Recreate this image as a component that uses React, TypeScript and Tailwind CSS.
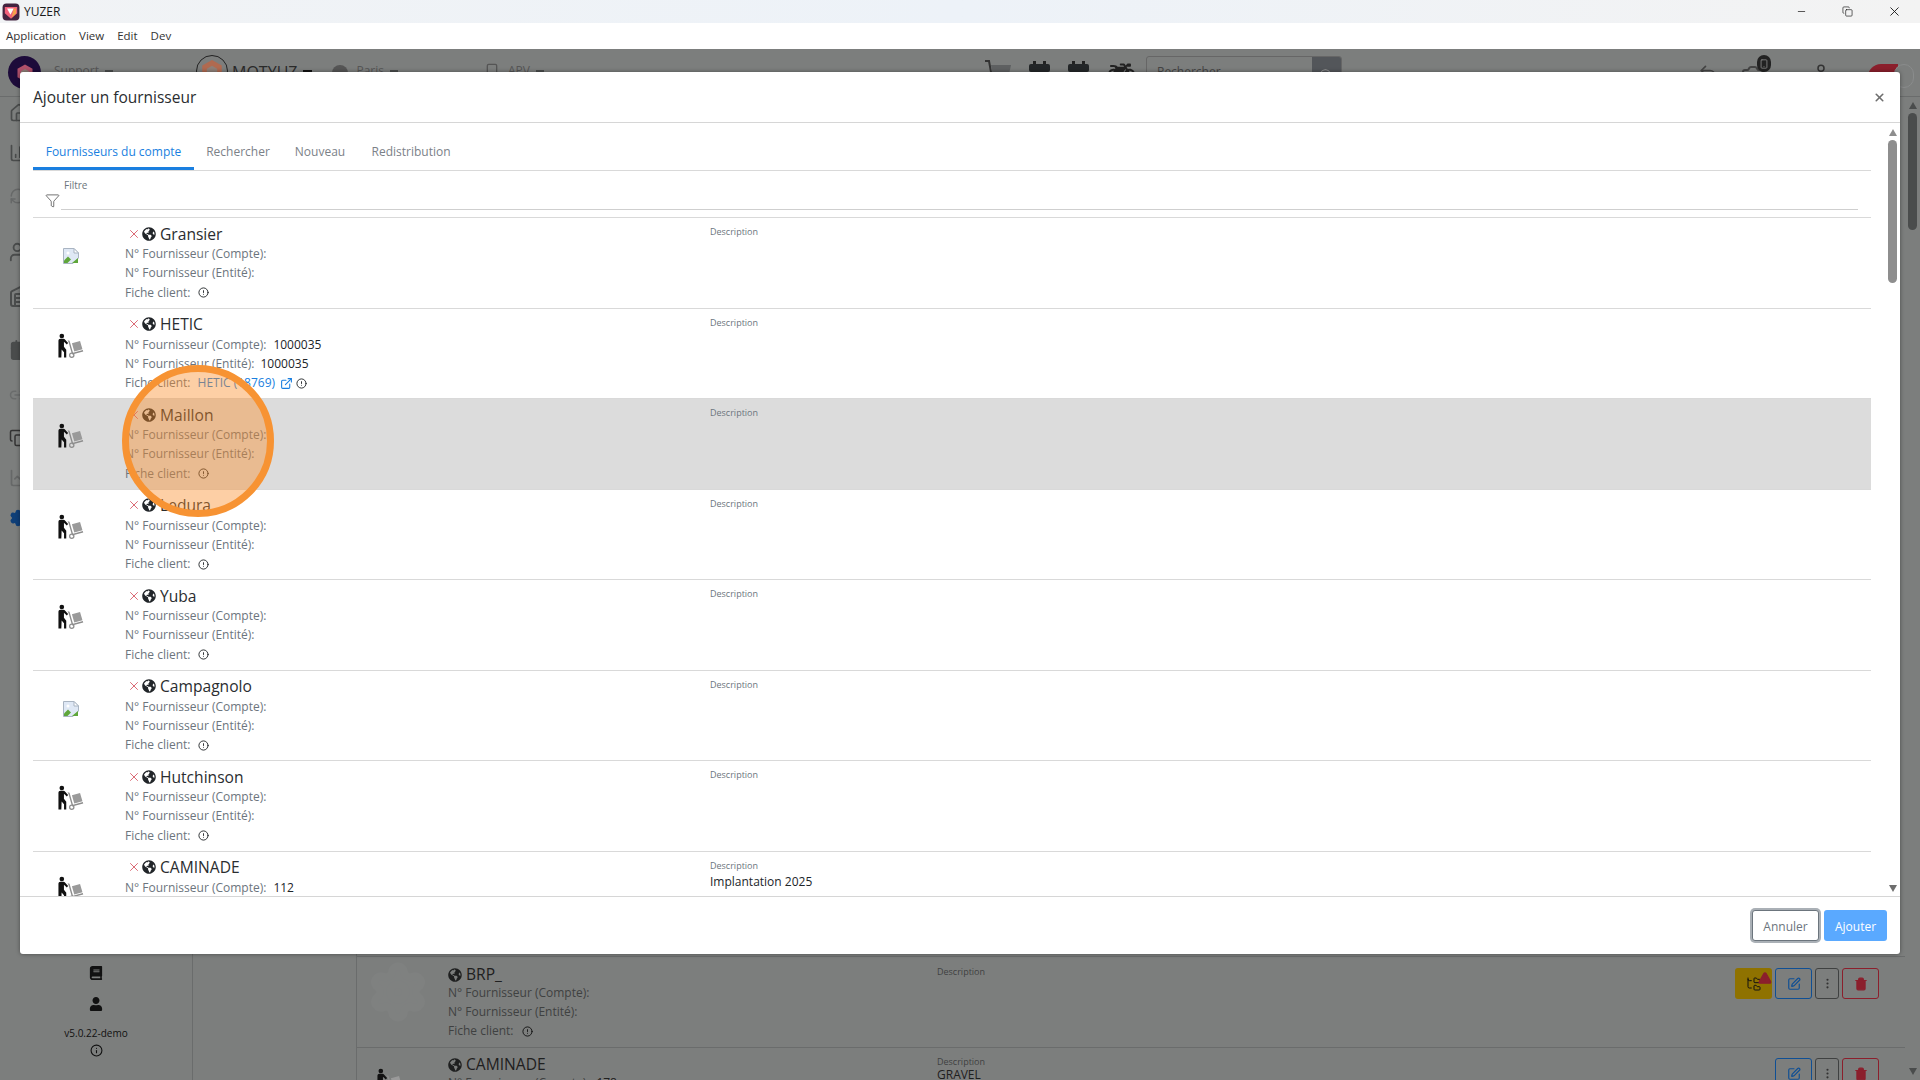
import React from "react";
import { FaGlobeAmericas, FaBook, FaUser, FaMotorcycle } from "react-icons/fa";
import { X, AlertCircle, ExternalLink, Filter, Minus, Home, BarChart3, RefreshCw, Users, Warehouse, Calendar, Link2, Settings, Search, Undo2, Camera, Info, Trash2, SquarePen, MoreVertical, FolderTree, TriangleAlert, User, LineChart, Smartphone, Copy } from "lucide-react";

function Dolly() {
  return (
    <svg width="27" height="26" viewBox="0 0 28 26" className="block">
      <circle cx="5" cy="2.6" r="2.4" fill="#111" />
      <path d="M1.5 7.5c0-1.2.9-2 2-2h3.2c.8 0 1.3.3 1.8 1l3 3.400-1.300 1.500-3-2.800v5.200l2.400 3V25H7.300v-5.600L4.800 16.500l-.3 8.500H1.500z" fill="#111" />
      <path d="M11 7l2 .6 3.600 12.400 10.200-2.800.4 1.400-11.600 3.200L12 9z" fill="#8d8d8d" />
      <circle cx="15.300" cy="22.600" r="2.200" fill="none" stroke="#8d8d8d" strokeWidth="1.300" />
      <path d="M15.500 10.200l8.400-2.400 2.500 8.500-8.500 2.400z" fill="#9a9a9a" />
    </svg>
  );
}

function BrokenImage() {
  return (
    <svg width="16" height="16" viewBox="0 0 16 16" className="block">
      <path d="M.5.500h10.500l4.500 4.500v5L10 15.500H.5z" fill="#dfe8f5" stroke="#a9b4c2" />
      <path d="M11 .5V5h4.500z" fill="#fff" stroke="#a9b4c2" />
      <path d="M1 15v-2.500L5 8.500l3 3-3.500 3.500z" fill="#5fa63a" />
      <path d="M9 15l6-5v5z" fill="#5fa63a" />
      <circle cx="5" cy="5" r="1.500" fill="#fff" />
    </svg>
  );
}

function Hex({ size, color }: { size: number; color: string }) {
  return (
    <svg width={size} height={size} viewBox="0 0 20 20" className="block">
      <path d="M10 1.500l7.500 4.300v8.400L10 18.500l-7.500-4.300V5.800z" fill={color} />
      <path d="M10 6l4 2.300v4L10 15l-4-2.700v-4z" fill="#8f8078" />
    </svg>
  );
}

function DarkCal() {
  return (
    <svg width="21" height="24" viewBox="0 0 21 24" className="block">
      <rect x="4" y="0" width="3" height="5" fill="#222" />
      <rect x="14" y="0" width="3" height="5" fill="#222" />
      <rect x="0" y="3" width="21" height="8" rx="2" fill="#232628" />
      <rect x="0" y="11" width="21" height="12" fill="#55585a" />
    </svg>
  );
}

function Cart() {
  return (
    <svg width="26" height="24" viewBox="0 0 26 24" className="block">
      <path d="M0 1h4l4 22" fill="none" stroke="#333" strokeWidth="2" />
      <path d="M6 5h20l-3 14H8z" fill="#5e6061" />
    </svg>
  );
}

function Caret() {
  return <div className="ml-[6px] mt-[21px] h-[4px] w-[8px] bg-[#4a4c4c]" />;
}

type Row = { name: string; image?: "broken"; compte?: string; entite?: string; link?: boolean; desc?: string; active?: boolean };
const rows: Row[] = [
  { name: "Gransier", image: "broken" },
  { name: "HETIC", compte: "1000035", entite: "1000035", link: true },
  { name: "Maillon", active: true },
  { name: "Ledura" },
  { name: "Yuba" },
  { name: "Campagnolo", image: "broken" },
  { name: "Hutchinson" },
  { name: "CAMINADE", compte: "112", desc: "Implantation 2025" },
];

function ListRow({ r }: { r: Row }) {
  return (
    <div className={`flex h-[90.5px] shrink-0 border-b border-[#d9d9d9] ${r.active ? "bg-[#dcdcdc]" : "bg-white"}`}>
      <div className="w-[92px] shrink-0">
        {r.image ? (
          <div className="ml-[30px] mt-[30px]"><BrokenImage /></div>
        ) : (
          <div className="ml-[24px] mt-[24px]"><Dolly /></div>
        )}
      </div>
      <div className="w-[585px] shrink-0 pt-[5px]">
        <div className="flex h-[21.500px] items-center">
          <X size={14} strokeWidth={1.6} className="ml-[2px] text-[#d8606c]" />
          <FaGlobeAmericas size={14} className="ml-[1px] text-[#212529]" />
          <span className="ml-[4px] text-[15.600px] font-medium leading-[22px] text-[#2a2d30]">{r.name}</span>
        </div>
        <div className="flex h-[19.3px] items-center text-[12px] text-[#6c757d]">
          <span>N° Fournisseur (Compte):</span>
          {r.compte && <span className="ml-[7px] text-[#212529]">{r.compte}</span>}
        </div>
        <div className="flex h-[19.3px] items-center text-[12px] text-[#6c757d]">
          <span>N° Fournisseur (Entité):</span>
          {r.entite && <span className="ml-[6px] text-[#212529]">{r.entite}</span>}
        </div>
        <div className="flex h-[19.3px] items-center text-[12px] text-[#6c757d]">
          <span>Fiche client:</span>
          {r.link && <span className="ml-[7px] text-[#1a7fe0]">HETIC (18769)</span>}
          {r.link && <ExternalLink size={13} className="ml-[5px] text-[#1a7fe0]" />}
          <AlertCircle size={11} strokeWidth={2} className={`${r.link ? "ml-[3px]" : "ml-[7px]"} text-[#212529]`} />
        </div>
      </div>
      <div className="pt-[7px]">
        <div className="text-[9px] leading-[13px] text-[#6c757d]">Description</div>
        {r.desc && <div className="mt-[2px] text-[12px] leading-[16px] text-[#212529]">{r.desc}</div>}
      </div>
    </div>
  );
}

function Modal() {
  return (
    <div className="absolute left-[20px] top-[23px] flex h-[882px] w-[1880px] flex-col rounded-[3px] bg-white shadow-[0_0_4px_rgba(0,0,0,0.4)]">
      <div className="flex h-[51px] shrink-0 items-center justify-between border-b border-[#d6d6d6] pl-[13px] pr-[14px]">
        <div className="pt-[2px] text-[15.500px] font-medium text-[#2a2d30]">Ajouter un fournisseur</div>
        <X size={13} strokeWidth={3} className="text-[#6e6e6e]" />
      </div>
      <div className="relative min-h-0 flex-1 overflow-hidden pl-[13px] pr-[29px]">
        <div className="flex h-[48px] items-end border-b border-[#d9d9d9] text-[12px] text-[#7b8188]">
          <div className="flex h-[47px] w-[161px] items-center justify-center border-b-[3px] border-[#1a7fe0] pt-[13px] text-[#1a7fe0]">Fournisseurs du compte</div>
          <div className="flex h-[47px] w-[88px] items-center justify-center pt-[11px]">Rechercher</div>
          <div className="flex h-[47px] w-[76px] items-center justify-center pt-[11px]">Nouveau</div>
          <div className="flex h-[47px] w-[106px] items-center justify-center pt-[11px]">Redistribution</div>
        </div>
        <div className="flex h-[47px] border-b border-[#d9d9d9]">
          <div className="w-[28px] shrink-0 pl-[12px] pt-[22px]">
            <Filter size={15} strokeWidth={1} className="text-[#222]" />
          </div>
          <div className="mr-[13px] flex h-[39px] flex-1 border-b border-[#cfcfcf] pt-[7px] pl-[3px] text-[10px] leading-[14px] text-[#6c757d]">Filtre</div>
        </div>
        {rows.map((r) => <ListRow key={r.name} r={r} />)}
        <div className="absolute right-[3px] top-[3px] flex h-[767px] w-[9px] flex-col items-center">
          <div className="mt-[3px] h-0 w-0 border-x-[4.500px] border-b-[7px] border-x-transparent border-b-[#8e8e8e]" />
          <div className="mt-[4px] h-[143px] w-[9px] rounded-full bg-[#8e8e8e]" />
          <div className="mt-auto mb-[1px] h-0 w-0 border-x-[4.500px] border-t-[7px] border-x-transparent border-t-[#6e6e6e]" />
        </div>
      </div>
      <div className="flex h-[58px] shrink-0 items-start justify-end gap-[5px] border-t border-[#d6d6d6] pr-[13px] pt-[13px] text-[12px]">
        <div className="flex h-[31px] w-[67px] items-center justify-center rounded-[3px] border border-[#6c757d] bg-white pt-[3px] text-[#6c757d] shadow-[0_0_0_2px_#aab0b6]">Annuler</div>
        <div className="flex h-[31px] w-[63px] items-center justify-center rounded-[3px] bg-[#5aa9ff] pt-[3px] text-white">Ajouter</div>
      </div>
    </div>
  );
}

function Highlight() {
  return <div className="absolute left-[122px] top-[316px] h-[152px] w-[152px] rounded-full border-[7px] border-[#f79333] bg-[rgba(250,140,40,0.42)]" />;
}

const sideIcons = [
  { mt: "mt-0", el: <Home size={20} /> },
  { mt: "mt-[16px]", el: <BarChart3 size={20} /> },
  { mt: "mt-[19px]", el: <RefreshCw size={18} className="text-[#666868]" /> },
  { mt: "mt-[32px]", el: <Users size={22} /> },
  { mt: "mt-[21px]", el: <Warehouse size={24} /> },
  { mt: "mt-[29px]", el: <Calendar size={22} fill="#4a4c4c" /> },
  { mt: "mt-[21px]", el: <Link2 size={18} className="text-[#6a6c6c]" /> },
  { mt: "mt-[19px]", el: <Copy size={18} className="text-[#333]" /> },
  { mt: "mt-[16px]", el: <LineChart size={20} className="text-[#666868]" /> },
  { mt: "mt-[16px]", el: <Settings size={18} className="text-[#0f3f78]" fill="#0f3f78" /> },
];

function Background() {
  return (
    <div className="absolute inset-0 flex flex-col bg-[#7c7e7d] text-[#3a3c3c]">
      <div className="flex h-[48px] shrink-0 items-start border-b border-[#6a6c6c]">
        <div className="ml-[8px] mt-[7px] flex h-[33px] w-[33px] items-center justify-center rounded-full bg-[#1d0b3a]"><Hex size={20} color="#b0506a" /></div>
        <div className="ml-[13px] mt-[13px] text-[12px] text-[#555]">Support</div>
        <Caret />
        <div className="ml-[83px] mt-[6px] flex h-[32px] w-[32px] items-center justify-center rounded-full border border-[#222]"><Hex size={26} color="#b06a50" /></div>
        <div className="ml-[4px] mt-[11px] text-[16px] text-[#2a2a2a]">MOTYUZ</div>
        <div className="ml-[6px] mt-[21px] h-[4px] w-[9px] bg-[#111]" />
        <div className="ml-[20px] mt-[16px] h-[16px] w-[16px] rounded-full bg-[#555]" />
        <div className="ml-[8px] mt-[13px] text-[12px] text-[#555]">Paris</div>
        <Caret />
        <Smartphone size={16} className="ml-[86px] mt-[14px] text-[#555]" />
        <div className="ml-[8px] mt-[13px] text-[12px] text-[#555]">APV</div>
        <Caret />
        <div className="ml-[441px] mt-[11px]"><Cart /></div>
        <div className="ml-[18px] mt-[12px]"><DarkCal /></div>
        <div className="ml-[18px] mt-[12px]"><DarkCal /></div>
        <FaMotorcycle size={27} className="ml-[19px] mt-[9px] text-[#222]" />
        <div className="ml-[11px] mt-[7px] flex h-[40px] w-[196px] overflow-hidden rounded-[3px] border border-[#666]">
          <div className="flex-1 pl-[10px] pt-[6px] text-[12px] text-[#444]">Rechercher</div>
          <div className="flex w-[29px] justify-center bg-[#53565a] pt-[11px]"><Search size={14} className="text-[#999]" /></div>
        </div>
        <Undo2 size={20} className="ml-[356px] mt-[14px] text-[#444]" />
        <Camera size={24} className="ml-[23px] mt-[14px] text-[#444]" />
        <div className="-ml-[8px] mt-[6px] flex h-[17px] w-[14px] items-center justify-center rounded-full bg-[#222]"><Smartphone size={10} className="text-[#888]" /></div>
        <User size={18} className="ml-[41px] mt-[14px] text-[#333]" />
        <div className="ml-[38px] mt-[15px] h-[26px] w-[30px] rounded-l-full bg-[#8b1f2c]" />
        <div className="-ml-[4px] mt-[15px] h-[24px] w-[20px] rounded-full border border-[#8a8c8c] bg-[#7c7e7d]" />
      </div>
      <div className="flex min-h-0 flex-1">
        <div className="flex w-[193px] shrink-0 flex-col border-r border-[#6a6c6c]">
          <div className="pt-[4px] text-[#4a4c4c]">
            {sideIcons.map((s, i) => (
              <div key={i} className={`flex h-[24px] items-center pl-[9px] ${s.mt}`}>{s.el}</div>
            ))}
          </div>
          <div className="mt-auto flex flex-col items-center pb-[23px]">
            <FaBook size={14} className="text-[#111]" />
            <FaUser size={14} className="mt-[17px] text-[#111]" />
            <div className="mt-[15px] text-[10px] text-[#111]">v5.0.22-demo</div>
            <Info size={13} className="mt-[3px] text-[#111]" />
          </div>
        </div>
        <div className="w-[164px] shrink-0 border-r border-[#6a6c6c]" />
        <div className="flex min-w-0 flex-1 flex-col justify-end pr-[15px]">
          <BgRow name="BRP_" warn />
          <BgRow name="CAMINADE" desc="GRAVEL" dolly cut compte="178" />
        </div>
      </div>
      <div className="absolute right-[3px] top-[48px] flex h-[983px] w-[9px] flex-col items-center">
        <div className="mt-[5px] h-0 w-0 border-x-[4.500px] border-b-[7px] border-x-transparent border-b-[#4a4c4c]" />
        <div className="mt-[4px] h-[117px] w-[9px] rounded-full bg-[#4a4c4c]" />
        <div className="mt-auto mb-[5px] h-0 w-0 border-x-[4.500px] border-t-[7px] border-x-transparent border-t-[#4a4c4c]" />
      </div>
    </div>
  );
}

function BgRow({ name, desc, warn, dolly, cut, compte }: { name: string; desc?: string; warn?: boolean; dolly?: boolean; cut?: boolean; compte?: string }) {
  return (
    <div className={`flex shrink-0 items-start ${cut ? "h-[32px] overflow-hidden pt-[3px]" : "h-[92px] border-y border-[#6a6c6c] pt-[4px]"}`}>
      <div className={`w-[91px] shrink-0 ${cut ? "pl-[19px] pt-[17px]" : "pl-[10px]"}`}>
        {dolly ? <Dolly /> : <Settings size={62} strokeWidth={3} className="text-[#7f8180]" fill="#7f8180" />}
      </div>
      <div className="w-[489px] shrink-0 text-[12px] text-[#3f4141]">
        <div className="flex h-[22px] items-center gap-[4px] pt-[5px] text-[15.600px] font-medium text-[#1f2020]">
          <FaGlobeAmericas size={14} />{name}
        </div>
        <div className="flex h-[19.300px] items-center">N° Fournisseur (Compte):{compte && <span className="ml-[7px] text-[#1f2020]">{compte}</span>}</div>
        <div className="flex h-[19.300px] items-center">N° Fournisseur (Entité):</div>
        <div className="flex h-[19.300px] items-center gap-[8px]">Fiche client: <AlertCircle size={11} className="text-[#111]" /></div>
      </div>
      <div className="min-w-0 flex-1 pt-[5px]">
        <div className="text-[9px] leading-[12px] text-[#3f4141]">Description</div>
        {desc && <div className="text-[12px] leading-[14px] text-[#1f2020]">{desc}</div>}
      </div>
      <div className="mt-[7px] flex shrink-0 gap-[3px] pr-[26px]">
        {warn && (
          <div className="relative flex h-[31px] w-[37px] items-center justify-center rounded-[3px] bg-[#8f7200]">
            <FolderTree size={16} strokeWidth={1.500} className="text-[#111]" />
            <TriangleAlert size={14} className="absolute right-0 top-[3px] text-[#8b1f2c]" fill="#8b1f2c" />
          </div>
        )}
        <div className="flex h-[31px] w-[37px] items-center justify-center rounded-[3px] border border-[#0f4f94]"><SquarePen size={14} className="text-[#0f4f94]" /></div>
        <div className="flex h-[31px] w-[24px] items-center justify-center rounded-[3px] border border-[#3f4141]"><MoreVertical size={13} className="text-[#333]" /></div>
        <div className="flex h-[31px] w-[37px] items-center justify-center rounded-[3px] border border-[#8b1f2c]"><Trash2 size={14} className="text-[#8b1f2c]" fill="#8b1f2c" /></div>
      </div>
    </div>
  );
}

export default function App() {
  return (
    <div className="flex h-[1080px] w-[1920px] flex-col overflow-hidden bg-white font-['Open_Sans','Noto_Sans',sans-serif]">
      <div className="flex h-[23px] shrink-0 items-center bg-gradient-to-r from-[#f1f3f5] via-[#edf2f8] to-[#f3f3f3] pl-[2px] text-[12px] text-[#1a1a1a]">
        <svg width="18" height="18" viewBox="0 0 16 16" className="shrink-0">
          <rect x="0.500" y="0.500" width="15" height="15" rx="3.500" fill="#43233f" />
          <path d="M2.500 3.500h11V9L8 14 2.500 9z" fill="#f2607a" />
          <path d="M4.500 4.800h6L7.500 10.500z" fill="#fff" />
          <path d="M10.500 4.800h2V9l-4 4z" fill="#f5a14a" />
        </svg>
        <span className="ml-[4px]">YUZER</span>
        <div className="ml-auto flex items-center">
          <Minus size={11} strokeWidth={1.500} className="mr-[35px] text-[#111]" />
          <Copy size={11} strokeWidth={1.400} className="mr-[34px] text-[#111]" />
          <X size={15} strokeWidth={1.400} className="mr-[18px] text-[#111]" />
        </div>
      </div>
      <div className="flex h-[26px] shrink-0 items-center gap-[13px] bg-white pl-[6px] text-[11.500px] text-[#333]">
        <span>Application</span><span>View</span><span>Edit</span><span>Dev</span>
      </div>
      <div className="relative min-h-0 flex-1">
        <Background />
        <Modal />
        <Highlight />
      </div>
    </div>
  );
}
